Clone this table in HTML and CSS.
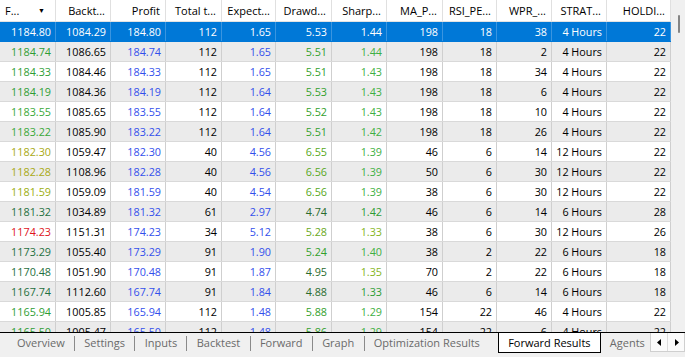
FILE: index.html
```html
<!DOCTYPE html>
<html>
<head>
<meta charset="utf-8">
<link rel="stylesheet" href="styles.css">
</head>
<body>
<div class="app">
  <div class="main">
    <div class="grid">
      <div class="row head">
        <div class="cell first"><span>F...</span><span class="sort">&#9660;</span></div>
        <div class="cell">Backt...</div>
        <div class="cell">Profit</div>
        <div class="cell">Total t...</div>
        <div class="cell">Expect...</div>
        <div class="cell">Drawd...</div>
        <div class="cell">Sharp...</div>
        <div class="cell">MA_P...</div>
        <div class="cell">RSI_PE...</div>
        <div class="cell">WPR_...</div>
        <div class="cell">STRAT...</div>
        <div class="cell">HOLDI...</div>
      </div>
      <div class="row sel">
        <div class="cell">1184.80</div><div class="cell">1084.29</div><div class="cell">184.80</div><div class="cell">112</div><div class="cell">1.65</div><div class="cell">5.53</div><div class="cell">1.44</div><div class="cell">198</div><div class="cell">18</div><div class="cell">38</div><div class="cell">4 Hours</div><div class="cell">22</div>
      </div>
      <div class="row alt">
        <div class="cell fg1">1184.74</div><div class="cell">1086.65</div><div class="cell blue">184.74</div><div class="cell">112</div><div class="cell blue">1.65</div><div class="cell dd1">5.51</div><div class="cell sh1">1.44</div><div class="cell">198</div><div class="cell">18</div><div class="cell">2</div><div class="cell">4 Hours</div><div class="cell">22</div>
      </div>
      <div class="row">
        <div class="cell fg1">1184.33</div><div class="cell">1084.46</div><div class="cell blue">184.33</div><div class="cell">112</div><div class="cell blue">1.65</div><div class="cell dd1">5.51</div><div class="cell sh1">1.43</div><div class="cell">198</div><div class="cell">18</div><div class="cell">34</div><div class="cell">4 Hours</div><div class="cell">22</div>
      </div>
      <div class="row alt">
        <div class="cell fg1">1184.19</div><div class="cell">1084.36</div><div class="cell blue">184.19</div><div class="cell">112</div><div class="cell blue">1.64</div><div class="cell dd1">5.53</div><div class="cell sh1">1.43</div><div class="cell">198</div><div class="cell">18</div><div class="cell">6</div><div class="cell">4 Hours</div><div class="cell">22</div>
      </div>
      <div class="row">
        <div class="cell fg2">1183.55</div><div class="cell">1085.65</div><div class="cell blue">183.55</div><div class="cell">112</div><div class="cell blue">1.64</div><div class="cell dd1">5.52</div><div class="cell sh1">1.43</div><div class="cell">198</div><div class="cell">18</div><div class="cell">10</div><div class="cell">4 Hours</div><div class="cell">22</div>
      </div>
      <div class="row alt">
        <div class="cell fg2">1183.22</div><div class="cell">1085.90</div><div class="cell blue">183.22</div><div class="cell">112</div><div class="cell blue">1.64</div><div class="cell dd1">5.51</div><div class="cell sh1">1.42</div><div class="cell">198</div><div class="cell">18</div><div class="cell">26</div><div class="cell">4 Hours</div><div class="cell">22</div>
      </div>
      <div class="row">
        <div class="cell fy">1182.30</div><div class="cell">1059.47</div><div class="cell blue">182.30</div><div class="cell">40</div><div class="cell blue">4.56</div><div class="cell dd2">6.55</div><div class="cell sh1">1.39</div><div class="cell">46</div><div class="cell">6</div><div class="cell">14</div><div class="cell">12 Hours</div><div class="cell">22</div>
      </div>
      <div class="row alt">
        <div class="cell fy">1182.28</div><div class="cell">1108.96</div><div class="cell blue">182.28</div><div class="cell">40</div><div class="cell blue">4.56</div><div class="cell dd2">6.56</div><div class="cell sh1">1.39</div><div class="cell">50</div><div class="cell">6</div><div class="cell">30</div><div class="cell">12 Hours</div><div class="cell">22</div>
      </div>
      <div class="row">
        <div class="cell fy2">1181.59</div><div class="cell">1059.09</div><div class="cell blue">181.59</div><div class="cell">40</div><div class="cell blue">4.54</div><div class="cell dd2">6.56</div><div class="cell sh1">1.39</div><div class="cell">38</div><div class="cell">6</div><div class="cell">30</div><div class="cell">12 Hours</div><div class="cell">22</div>
      </div>
      <div class="row alt">
        <div class="cell fd">1181.32</div><div class="cell">1034.89</div><div class="cell blue">181.32</div><div class="cell">61</div><div class="cell blue">2.97</div><div class="cell dd3">4.74</div><div class="cell sh2">1.42</div><div class="cell">46</div><div class="cell">6</div><div class="cell">14</div><div class="cell">6 Hours</div><div class="cell">28</div>
      </div>
      <div class="row">
        <div class="cell fr">1174.23</div><div class="cell">1151.31</div><div class="cell blue">174.23</div><div class="cell">34</div><div class="cell blue">5.12</div><div class="cell dd4">5.28</div><div class="cell sh3">1.33</div><div class="cell">38</div><div class="cell">6</div><div class="cell">30</div><div class="cell">12 Hours</div><div class="cell">26</div>
      </div>
      <div class="row alt">
        <div class="cell fd">1173.29</div><div class="cell">1055.40</div><div class="cell blue">173.29</div><div class="cell">91</div><div class="cell blue">1.90</div><div class="cell dd1">5.24</div><div class="cell sh1">1.40</div><div class="cell">38</div><div class="cell">2</div><div class="cell">22</div><div class="cell">6 Hours</div><div class="cell">18</div>
      </div>
      <div class="row">
        <div class="cell fd">1170.48</div><div class="cell">1051.90</div><div class="cell blue">170.48</div><div class="cell">91</div><div class="cell blue">1.87</div><div class="cell dd3">4.95</div><div class="cell sh3">1.35</div><div class="cell">70</div><div class="cell">2</div><div class="cell">22</div><div class="cell">6 Hours</div><div class="cell">18</div>
      </div>
      <div class="row alt">
        <div class="cell fd">1167.74</div><div class="cell">1112.60</div><div class="cell blue">167.74</div><div class="cell">91</div><div class="cell blue">1.84</div><div class="cell dd3">4.88</div><div class="cell sh2">1.33</div><div class="cell">46</div><div class="cell">6</div><div class="cell">14</div><div class="cell">6 Hours</div><div class="cell">18</div>
      </div>
      <div class="row">
        <div class="cell fg1">1165.94</div><div class="cell">1005.85</div><div class="cell blue">165.94</div><div class="cell">112</div><div class="cell blue">1.48</div><div class="cell dd1">5.88</div><div class="cell sh1">1.29</div><div class="cell">154</div><div class="cell">22</div><div class="cell">46</div><div class="cell">4 Hours</div><div class="cell">22</div>
      </div>
      <div class="row alt">
        <div class="cell fg1">1165.50</div><div class="cell">1005.47</div><div class="cell blue">165.50</div><div class="cell">112</div><div class="cell blue">1.48</div><div class="cell dd1">5.86</div><div class="cell sh1">1.29</div><div class="cell">154</div><div class="cell">22</div><div class="cell">6</div><div class="cell">4 Hours</div><div class="cell">22</div>
      </div>
    </div>
    <div class="vscroll"><div class="thumb"></div></div>
  </div>
  <div class="tabs">
    <span class="tab first-tab">Overview</span><span class="sep"></span>
    <span class="tab">Settings</span><span class="sep"></span>
    <span class="tab">Inputs</span><span class="sep"></span>
    <span class="tab">Backtest</span><span class="sep"></span>
    <span class="tab">Forward</span><span class="sep"></span>
    <span class="tab">Graph</span><span class="sep"></span>
    <span class="tab">Optimization Results</span>
    <span class="tab active">Forward Results</span>
    <span class="tab">Agents</span>
    <div class="arrows">
      <span class="arr"><svg width="5" height="7" viewBox="0 0 5 7"><path d="M4 0L0 3.5L4 7Z" fill="#000"/></svg></span>
      <span class="arr"><svg width="5" height="7" viewBox="0 0 5 7"><path d="M1 0L5 3.5L1 7Z" fill="#000"/></svg></span>
    </div>
  </div>
</div>
</body>
</html>
```
FILE: styles.css
```css
* { box-sizing: border-box; }
html, body { margin: 0; padding: 0; }
body {
  width: 685px;
  height: 357px;
  overflow: hidden;
  background: #f0f0f0;
  font-family: "Open Sans", "Noto Sans", sans-serif;
  color: #000;
}
.app {
  display: flex;
  flex-direction: column;
  height: 357px;
}
.main {
  display: flex;
  height: 332px;
  overflow: hidden;
}
.grid {
  width: 671px;
  background: #fff;
  font-size: 10.8px;
}
.vscroll {
  width: 14px;
  background: #f0f0f0;
  padding: 15px 0 0 7px;
}
.thumb {
  width: 2px;
  height: 18px;
  background: #858585;
  border-radius: 1px;
}
.row {
  display: grid;
  grid-template-columns: 56px 55px 55px 56px 54px 56px 55px 56px 54px 55px 55px 64px;
  height: 20px;
  border-bottom: 1px solid #d9d9d9;
}
.row.alt { background: #ebebeb; }
.row.head {
  height: 22px;
  background: #fff;
  font-size: 11px;
  border-bottom: 1px solid #e3e3e3;
}
.cell {
  border-right: 1px solid #cfcfcf;
  padding: 0 4px 0 2px;
  text-align: right;
  line-height: 19px;
  white-space: nowrap;
  overflow: hidden;
}
.head .cell { line-height: 21px; padding-right: 5px; border-right-color: #e0e0e0; }
.head .cell.first {
  display: flex;
  justify-content: space-between;
  padding: 0 10px 0 5px;
}
.sort { font-size: 7px; }
.row.sel { background: #0078d7; color: #fff; border-bottom-color: #0078d7; }
.row.sel .cell { border-right-color: #3a95e0; }

.blue { color: #3350ec; }
.fg1 { color: #2f9e35; }
.fg2 { color: #3aa838; }
.fy { color: #a9a914; }
.fy2 { color: #9cae10; }
.fd { color: #1f7040; }
.fr { color: #e0141b; }
.dd1 { color: #33a02c; }
.dd2 { color: #58a822; }
.dd3 { color: #2a6c2e; }
.dd4 { color: #6aa81c; }
.sh1 { color: #3fb043; }
.sh2 { color: #2e9c33; }
.sh3 { color: #86b51e; }

.tabs {
  position: relative;
  display: flex;
  align-items: flex-start;
  height: 25px;
  border-top: 1px solid #000;
  font-size: 11px;
  color: #6a6a6a;
  white-space: nowrap;
  overflow: hidden;
}
.tab {
  padding: 0 9.3px;
  line-height: 19px;
  height: 20px;
}
.first-tab { padding-left: 17px; }
.sep {
  width: 1px;
  height: 15px;
  margin-top: 3px;
  background: #8a8a8a;
}
.tab.active {
  margin: -1px 0 0 9px;
  height: 21px;
  padding: 1px 9px 0 9px;
  background: #fff;
  color: #000;
  border: 1px solid #000;
  border-top: none;
}
.arrows {
  position: absolute;
  left: 650px;
  top: -1px;
  width: 35px;
  height: 20px;
  display: flex;
  background: #f0f0f0;
  border: 1px solid #cfcfcf;
}
.arr {
  flex: 1;
  display: flex;
  align-items: center;
  justify-content: center;
  background: #fbfbfb;
}
.arr + .arr { border-left: 1px solid #dcdcdc; }
```
